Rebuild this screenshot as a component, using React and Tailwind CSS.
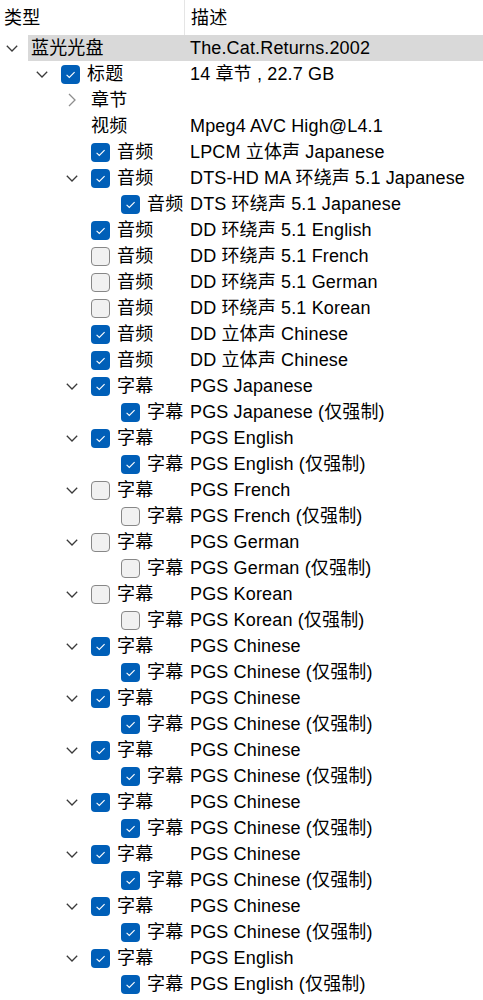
import React from 'react';

// one tree row: level, expand state, checkbox state, type label, description
const ROWS = [
    { lv: 0, ex: 'down', cb: null, type: '蓝光光盘', desc: 'The.Cat.Returns.2002', sel: true },
    { lv: 1, ex: 'down', cb: true, type: '标题', desc: '14 章节 , 22.7 GB' },
    { lv: 2, ex: 'right', cb: null, type: '章节', desc: '' },
    { lv: 2, cb: null, type: '视频', desc: 'Mpeg4 AVC High@L4.1' },
    { lv: 2, cb: true, type: '音频', desc: 'LPCM 立体声 Japanese' },
    { lv: 2, ex: 'down', cb: true, type: '音频', desc: 'DTS-HD MA 环绕声 5.1 Japanese' },
    { lv: 3, cb: true, type: '音频', desc: 'DTS 环绕声 5.1 Japanese' },
    { lv: 2, cb: true, type: '音频', desc: 'DD 环绕声 5.1 English' },
    { lv: 2, cb: false, type: '音频', desc: 'DD 环绕声 5.1 French' },
    { lv: 2, cb: false, type: '音频', desc: 'DD 环绕声 5.1 German' },
    { lv: 2, cb: false, type: '音频', desc: 'DD 环绕声 5.1 Korean' },
    { lv: 2, cb: true, type: '音频', desc: 'DD 立体声 Chinese' },
    { lv: 2, cb: true, type: '音频', desc: 'DD 立体声 Chinese' },
];

const SUBS = [
    ['Japanese', true], ['English', true], ['French', false], ['German', false], ['Korean', false],
    ['Chinese', true], ['Chinese', true], ['Chinese', true], ['Chinese', true], ['Chinese', true],
    ['Chinese', true], ['English', true],
];
SUBS.forEach(([lang, on]) => {
    ROWS.push({ lv: 2, ex: 'down', cb: on, type: '字幕', desc: `PGS ${lang}` });
    ROWS.push({ lv: 3, cb: on, type: '字幕', desc: `PGS ${lang} (仅强制)` });
});

// indent + expander slot, and the remaining width of the type column (ends at x=190)
const SLOT = ['w-[28px]', 'w-[58px]', 'w-[88px]', 'w-[118px]'];
const LABEL = ['w-[162px]', 'w-[132px]', 'w-[102px]', 'w-[72px]'];
const PAD = ['pl-0', 'pl-[30px]', 'pl-[60px]', 'pl-[90px]'];

function Chevron({ dir }) {
    if (dir === 'down') {
        return (
            <svg width="12" height="7" viewBox="0 0 12 7" fill="none">
                <path d="M0.8 0.8 L6 6 L11.2 0.8" stroke="#3a3a3a" strokeWidth="1.3" />
            </svg>
        );
    }
    return (
        <svg width="8" height="14" viewBox="0 0 8 14" fill="none">
            <path d="M1 1 L7 7 L1 13" stroke="#8e8e8e" strokeWidth="1.3" />
        </svg>
    );
}

function CheckBox({ on }) {
    if (on) {
        return (
            <span className="flex-none w-[19px] h-[19px] rounded-[4px] bg-[#005fb8] flex items-center justify-center mr-[7px]">
                <svg width="19" height="19" viewBox="0 0 19 19" fill="none">
                    <path d="M5.6 9.8 L8.3 12.4 L13.6 7.1" stroke="#ffffff" strokeWidth="1.1" />
                </svg>
            </span>
        );
    }
    return <span className="flex-none w-[19px] h-[19px] rounded-[4px] bg-[#f1f1f1] border border-[#878787] mr-[7px]" />;
}

function Row({ row }) {
    return (
        <div className="flex h-[26px] items-center whitespace-nowrap">
            <div className={`${SLOT[row.lv]} ${PAD[row.lv]} flex-none h-full flex items-center`}>
                <span className="w-[24px] flex justify-center">{row.ex ? <Chevron dir={row.ex} /> : null}</span>
            </div>
            <div className={`flex-1 h-full flex items-center ${row.sel ? 'bg-[#d9d9d9]' : ''}`}>
                <div className={`${LABEL[row.lv]} flex-none flex items-center pl-[3px]`}>
                    {row.cb === null ? null : <CheckBox on={row.cb} />}
                    <span>{row.type}</span>
                </div>
                <span>{row.desc}</span>
            </div>
        </div>
    );
}

export default function App() {
    return (
        <div className="w-[483px] h-[1000px] overflow-hidden bg-white text-black text-[18px] leading-[26px] tracking-[0.15px] font-['Liberation_Sans','Noto_Sans_CJK_SC',sans-serif]">
            <div className="flex h-[35px] items-center">
                <div className="w-[185px] h-full flex items-center pl-[4px] border-r border-[#e5e5e5]">类型</div>
                <div className="pl-[6px]">描述</div>
            </div>
            {ROWS.map((r, i) => <Row key={i} row={r} />)}
        </div>
    );
}
